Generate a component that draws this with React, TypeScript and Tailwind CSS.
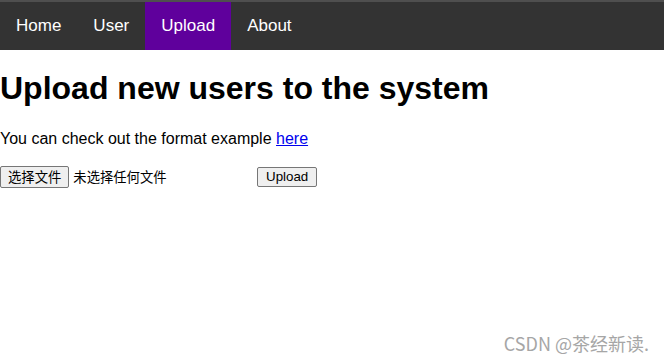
import React from 'react'

const links = ['Home', 'User', 'Upload', 'About']

const App = () => {
  const active = 'Upload'

  return (
    <div className="relative h-[362px] w-[664px] bg-white font-['Liberation_Sans',Arial,sans-serif] text-black">
      <div className="h-[2px] bg-[#4f4f4f]" />
      <nav className="flex h-[48px] bg-[#333333]">
        {links.map((link) => (
          <a
            key={link}
            href="#"
            className={
              link === active
                ? 'flex items-center bg-[#5f009c] px-4 text-[17px] text-white'
                : 'flex items-center px-4 text-[17px] text-white'
            }
          >
            {link}
          </a>
        ))}
      </nav>

      <h1 className="mt-[20px] text-[32px] font-bold leading-[37px]">
        Upload new users to the system
      </h1>
      <p className="mt-[23px] text-[16px] leading-[18px]">
        You can check out the format example{' '}
        <a href="#" className="text-[#0000ee] underline">
          here
        </a>
      </p>

      <div className="mt-[18px] flex items-center">
        <div className="flex w-[257px] items-center">
          <button className="h-[22px] rounded-[2px] border border-[#767676] bg-[#efefef] px-[7px] font-['Noto_Sans_CJK_SC',sans-serif] text-[13.33px] leading-[18px]">
            选择文件
          </button>
          <span className="ml-[4px] font-['Noto_Sans_CJK_SC',sans-serif] text-[13.33px]">
            未选择任何文件
          </span>
        </div>
        <button className="h-[20px] rounded-[2px] border border-[#767676] bg-[#efefef] px-[8px] text-[13.33px] leading-[16px]">
          Upload
        </button>
      </div>

      <div className="absolute bottom-[8px] right-[15px] font-['Noto_Sans_CJK_SC',sans-serif] text-[18px] leading-[22px] text-[#a6a6a6]">
        CSDN @茶经新读.
      </div>
    </div>
  )
}

export default App
